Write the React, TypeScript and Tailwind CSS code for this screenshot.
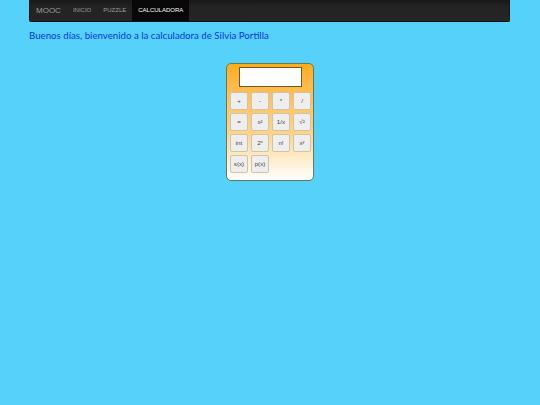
const rows = [
  ["+", "-", "*", "/"],
  ["=", "x²", "1/x", "√²"],
  ["int", "2ⁿ", "n!", "xʸ"],
  ["s(x)", "p(x)"],
];

const links = ["INICIO", "PUZZLE"];

export default function App() {
  return (
    <div className="min-h-[405px] bg-[#56d2fa] px-[29px] font-['Liberation_Sans',sans-serif] antialiased">
      <nav className="mr-[1px] flex h-[22px] items-stretch rounded-b-[2px] border border-t-0 border-[#111] bg-gradient-to-b from-[#181818] via-[#232323] via-30% to-[#252525]">
        <span className="flex items-center px-[6px] text-[8px] text-[#9d9d9d]">MOOC</span>
        <div className="flex">
          {links.map((link) => (
            <a key={link} className="flex items-center px-[6px] text-[6px] text-[#9d9d9d]">{link}</a>
          ))}
          <a className="flex items-center bg-[#080808] px-[6px] text-[6px] text-white">CALCULADORA</a>
        </div>
      </nav>

      <p className="mt-[6px] font-['Lato',sans-serif] text-[9.7px] leading-[14px] text-[#0a35e8]">
        Buenos días, bienvenido a la calculadora de Silvia Portilla
      </p>

      <div className="mt-[21px] flex justify-center">
        <div className="h-[118px] w-[88px] rounded-[5px] border border-[#667a55] bg-gradient-to-b from-[#ffac14] via-[#ffd58a] via-60% to-white pl-[3px] pt-[3px]">
          <div className="ml-[9px] h-[20px] w-[63px] border border-[#6b5a2c] bg-white" />
          <div className="mt-[5px] flex flex-col gap-[3px]">
            {rows.map((row) => (
              <div key={row[0]} className="flex gap-[3px]">
                {row.map((label) => (
                  <button
                    key={label}
                    type="button"
                    className="grid h-[18px] w-[18px] place-items-center rounded-[2px] border border-[#cfc3a8] bg-[#eeeeee] text-[6.2px] leading-none text-[#444]"
                  >
                    {label}
                  </button>
                ))}
              </div>
            ))}
          </div>
        </div>
      </div>
    </div>
  );
}
